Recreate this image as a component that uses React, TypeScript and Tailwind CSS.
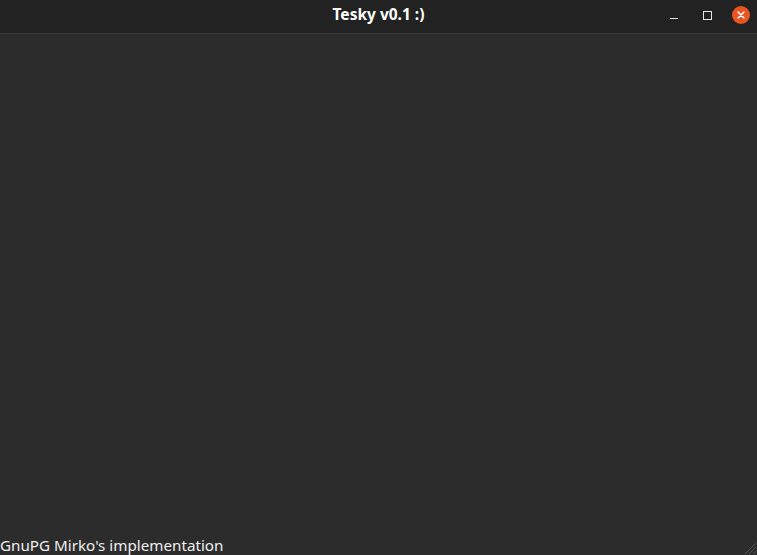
export default function App() {
  return (
    <div className="flex h-[555px] w-[757px] flex-col overflow-hidden bg-[#2c2c2c] font-['Noto_Sans',sans-serif] text-[#f2f2f2]">
      {/* title bar */}
      <div className="flex h-[34px] shrink-0 items-center border-b border-[#3a3a3a] bg-[#222222] pb-[3px]">
        <div className="w-[100px]" />
        <div className="flex-1 text-center text-[15.5px] font-bold leading-none text-white">
          Tesky v0.1 :)
        </div>
        <div className="flex w-[100px] items-center justify-end pr-[7px]">
          <div className="mt-[7px] h-[1.5px] w-[8px] bg-[#e8e8e8]" />
          <div className="ml-[25px] h-[9px] w-[9px] border-[1.5px] border-[#e8e8e8]" />
          <div className="ml-[20px] flex h-[18px] w-[18px] items-center justify-center rounded-full bg-[#e95420]">
            <svg width="10" height="10" viewBox="0 0 10 10">
              <path d="M2 2 L8 8 M8 2 L2 8" stroke="#fff" strokeWidth="1.5" strokeLinecap="round" />
            </svg>
          </div>
        </div>
      </div>

      {/* empty content */}
      <div className="flex-1" />

      {/* status line */}
      <div className="relative flex h-[22px] shrink-0 items-end">
        <span className="text-[15.2px] leading-[20px] text-[#efefef]">GnuPG Mirko's implementation</span>
        <svg className="absolute bottom-0 right-0" width="16" height="16" viewBox="0 0 16 16">
          <path d="M15 4 L4 15 M15 8 L8 15 M15 12 L12 15" stroke="#555" strokeWidth="1" />
        </svg>
      </div>
    </div>
  );
}
